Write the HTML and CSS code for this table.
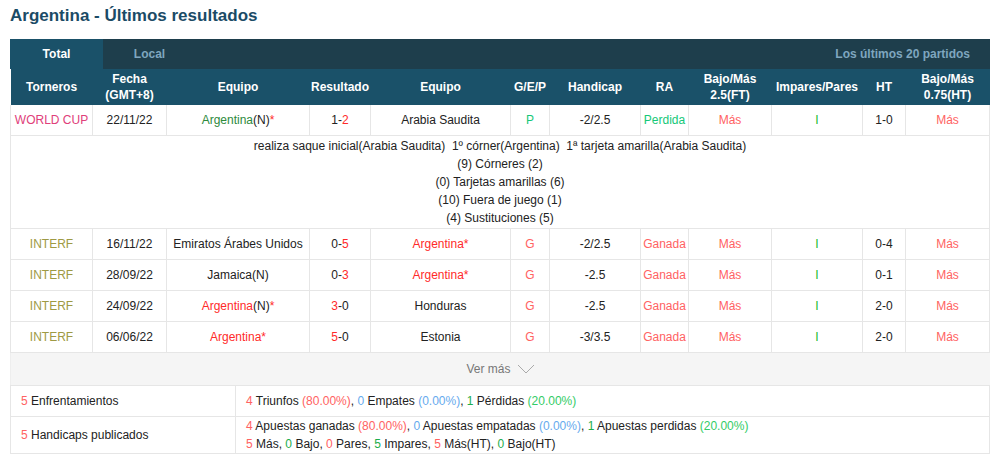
FILE: index.html
```html
<!DOCTYPE html>
<html lang="es">
<head>
    <meta charset="UTF-8">
    <meta name="viewport" content="width=device-width, initial-scale=1.0">
    <title>Argentina - Últimos resultados</title>
    <link rel="stylesheet" href="styles.css">
</head>
<body>
    <h1 class="title">Argentina - Últimos resultados</h1>
    <div class="box">
        <div class="tabs">
            <div class="tab active">Total</div>
            <div class="tab">Local</div>
            <div class="tabs-info">Los últimos 20 partidos</div>
        </div>
        <table class="results">
            <colgroup>
                <col style="width:82px"><col style="width:74px"><col style="width:143px"><col style="width:61px">
                <col style="width:140px"><col style="width:39px"><col style="width:91px"><col style="width:48px">
                <col style="width:83px"><col style="width:91px"><col style="width:43px"><col style="width:84px">
            </colgroup>
            <thead>
                <tr>
                    <th>Torneros</th>
                    <th>Fecha<br>(GMT+8)</th>
                    <th>Equipo</th>
                    <th>Resultado</th>
                    <th>Equipo</th>
                    <th>G/E/P</th>
                    <th>Handicap</th>
                    <th>RA</th>
                    <th>Bajo/Más<br>2.5(FT)</th>
                    <th>Impares/Pares</th>
                    <th>HT</th>
                    <th>Bajo/Más<br>0.75(HT)</th>
                </tr>
            </thead>
            <tbody>
                <tr>
                    <td class="wc">WORLD CUP</td>
                    <td>22/11/22</td>
                    <td><span class="green">Argentina</span>(N)<span class="red">*</span></td>
                    <td>1-<span class="red">2</span></td>
                    <td>Arabia Saudita</td>
                    <td class="lose">P</td>
                    <td>-2/2.5</td>
                    <td class="lose">Perdida</td>
                    <td class="pink">Más</td>
                    <td class="odd">I</td>
                    <td>1-0</td>
                    <td class="pink">Más</td>
                </tr>
                <tr class="details">
                    <td colspan="12">
                        realiza saque inicial(Arabia Saudita)&nbsp; 1º córner(Argentina)&nbsp; 1ª tarjeta amarilla(Arabia Saudita)<br>
                        (9) Córneres (2)<br>
                        (0) Tarjetas amarillas (6)<br>
                        (10) Fuera de juego (1)<br>
                        (4) Sustituciones (5)
                    </td>
                </tr>
                <tr>
                    <td class="comp">INTERF</td>
                    <td>16/11/22</td>
                    <td>Emiratos Árabes Unidos</td>
                    <td>0-<span class="red">5</span></td>
                    <td class="red">Argentina*</td>
                    <td class="pink">G</td>
                    <td>-2/2.5</td>
                    <td class="pink">Ganada</td>
                    <td class="pink">Más</td>
                    <td class="odd">I</td>
                    <td>0-4</td>
                    <td class="pink">Más</td>
                </tr>
                <tr>
                    <td class="comp">INTERF</td>
                    <td>28/09/22</td>
                    <td>Jamaica(N)</td>
                    <td>0-<span class="red">3</span></td>
                    <td class="red">Argentina*</td>
                    <td class="pink">G</td>
                    <td>-2.5</td>
                    <td class="pink">Ganada</td>
                    <td class="pink">Más</td>
                    <td class="odd">I</td>
                    <td>0-1</td>
                    <td class="pink">Más</td>
                </tr>
                <tr>
                    <td class="comp">INTERF</td>
                    <td>24/09/22</td>
                    <td><span class="red">Argentina</span>(N)<span class="red">*</span></td>
                    <td><span class="red">3</span>-0</td>
                    <td>Honduras</td>
                    <td class="pink">G</td>
                    <td>-2.5</td>
                    <td class="pink">Ganada</td>
                    <td class="pink">Más</td>
                    <td class="odd">I</td>
                    <td>2-0</td>
                    <td class="pink">Más</td>
                </tr>
                <tr>
                    <td class="comp">INTERF</td>
                    <td>06/06/22</td>
                    <td class="red">Argentina*</td>
                    <td><span class="red">5</span>-0</td>
                    <td>Estonia</td>
                    <td class="pink">G</td>
                    <td>-3/3.5</td>
                    <td class="pink">Ganada</td>
                    <td class="pink">Más</td>
                    <td class="odd">I</td>
                    <td>2-0</td>
                    <td class="pink">Más</td>
                </tr>
            </tbody>
        </table>
        <div class="more">
            Ver más
            <svg width="18" height="10" viewBox="0 0 18 10"><path d="M1 1 L9 9 L17 1" fill="none" stroke="#aaa" stroke-width="1"/></svg>
        </div>
        <table class="summary">
            <tr>
                <td class="label"><span class="pink">5</span> Enfrentamientos</td>
                <td><span class="pink">4</span> Triunfos <span class="pink">(80.00%)</span>, <span class="blue">0</span> Empates <span class="blue">(0.00%)</span>, <span class="dgreen">1</span> Pérdidas <span class="lgreen">(20.00%)</span></td>
            </tr>
            <tr>
                <td class="label"><span class="pink">5</span> Handicaps publicados</td>
                <td>
                    <span class="pink">4</span> Apuestas ganadas <span class="pink">(80.00%)</span>, <span class="blue">0</span> Apuestas empatadas <span class="blue">(0.00%)</span>, <span class="dgreen">1</span> Apuestas perdidas <span class="lgreen">(20.00%)</span><br>
                    <span class="pink">5</span> Más, <span class="dgreen">0</span> Bajo, <span class="pink">0</span> Pares, <span class="dgreen">5</span> Impares, <span class="pink">5</span> Más(HT), <span class="dgreen">0</span> Bajo(HT)
                </td>
            </tr>
        </table>
    </div>
</body>
</html>
```

FILE: styles.css
```css
body {
    margin: 0;
    padding: 0 10px;
    font-family: "Liberation Sans", Arial, sans-serif;
    font-size: 12px;
    color: #222;
    background: #fff;
}
.title {
    margin: 0;
    padding: 6px 0 0;
    height: 39px;
    box-sizing: border-box;
    font-size: 17px;
    font-weight: bold;
    color: #1b4b66;
}
.box {
    width: 980px;
}
.tabs {
    display: flex;
    height: 30px;
    background: #1e3e4c;
    line-height: 30px;
    font-weight: bold;
    font-size: 12px;
}
.tab {
    width: 93px;
    text-align: center;
    color: #7fa6bf;
}
.tab.active {
    background: #1a5169;
    color: #fff;
}
.tabs-info {
    margin-left: auto;
    padding-right: 20px;
    color: #7fa6bf;
}
table {
    border-collapse: collapse;
    width: 980px;
    table-layout: fixed;
}
.results th {
    background: #1a5169;
    color: #fff;
    font-weight: bold;
    height: 36px;
    padding: 0;
    line-height: 16px;
}
.results td {
    height: 30px;
    padding: 0;
    text-align: center;
    border: 1px solid #e6e6e6;
}
.results tr:first-child td {
    border-top: none;
}
.results .details td {
    height: auto;
    padding: 1px 0 1px;
    line-height: 18px;
}
.wc { color: #e0407a; }
.comp { color: #9e9a44; }
.green { color: #2d8a3c; }
.red { color: #ff2a2a; }
.pink { color: #ff6262; }
.lose { color: #14c878; }
.odd { color: #22bb33; }
.blue { color: #66aaee; }
.dgreen { color: #1cad4c; }
.lgreen { color: #33cc66; }
.more {
    background: #f5f5f5;
    height: 32px;
    display: flex;
    align-items: center;
    justify-content: center;
    gap: 6px;
    color: #777;
    border-left: 1px solid #eee;
}
.summary {
    margin-top: 0;
}
.summary td {
    border: 1px solid #e6e6e6;
    padding: 0 10px;
    height: 30px;
    line-height: 18px;
}
.summary .label {
    width: 204px;
}
.summary tr:last-child td {
    height: 36px;
}
```
